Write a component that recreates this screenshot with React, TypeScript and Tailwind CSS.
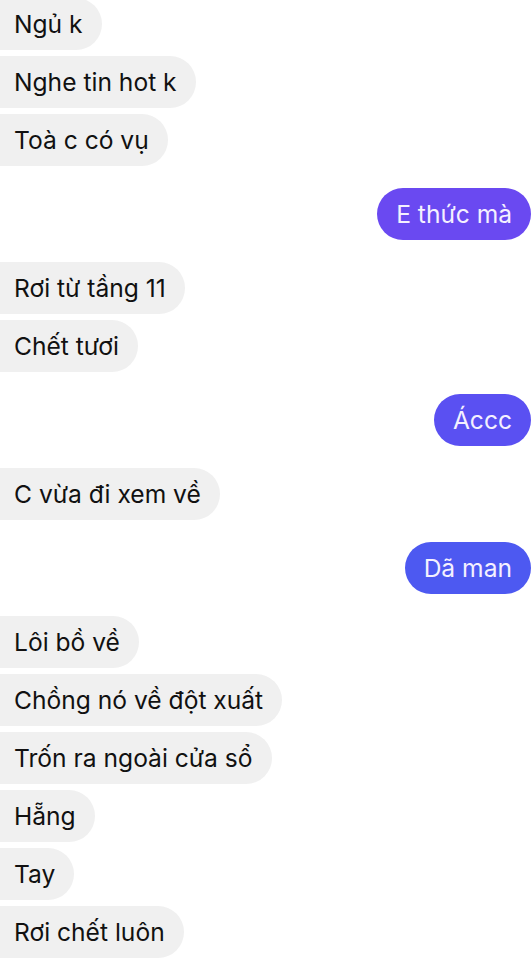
type Msg = { text: string; mine?: boolean; color?: string };

const groups: Msg[][] = [
  [{ text: "Ngủ k" }, { text: "Nghe tin hot k" }, { text: "Toà c có vụ" }],
  [{ text: "E thức mà", mine: true, color: "bg-[#6a49f1]" }],
  [{ text: "Rơi từ tầng 11" }, { text: "Chết tươi" }],
  [{ text: "Áccc", mine: true, color: "bg-[#5a50f2]" }],
  [{ text: "C vừa đi xem về" }],
  [{ text: "Dã man", mine: true, color: "bg-[#4d59f1]" }],
  [
    { text: "Lôi bồ về" },
    { text: "Chồng nó về đột xuất" },
    { text: "Trốn ra ngoài cửa sổ" },
    { text: "Hẵng" },
    { text: "Tay" },
    { text: "Rơi chết luôn" },
  ],
];

const Bubble = ({ msg }: { msg: Msg }) => {
  if (msg.mine) {
    return (
      <div className="flex justify-end pr-[1px]">
        <div
          className={`${msg.color} h-[52px] px-[19px] rounded-full flex items-center text-[24.6px] text-[#f4f0ff]`}
        >
          {msg.text}
        </div>
      </div>
    );
  }
  return (
    <div className="flex justify-start">
      <div className="bg-[#f0f0f0] h-[52px] pl-[14px] pr-[19px] rounded-r-full flex items-center text-[24.6px] text-[#111111]">
        {msg.text}
      </div>
    </div>
  );
};

export default function App() {
  return (
    <div
      className="w-[532px] h-[960px] bg-white overflow-hidden"
      style={{ fontFamily: "Inter, 'Noto Sans', sans-serif" }}
    >
      <div className="flex flex-col gap-[22px] -mt-[2px]">
        {groups.map((g, i) => (
          <div key={i} className="flex flex-col gap-[6px]">
            {g.map((m, j) => (
              <Bubble key={j} msg={m} />
            ))}
          </div>
        ))}
      </div>
    </div>
  );
}
